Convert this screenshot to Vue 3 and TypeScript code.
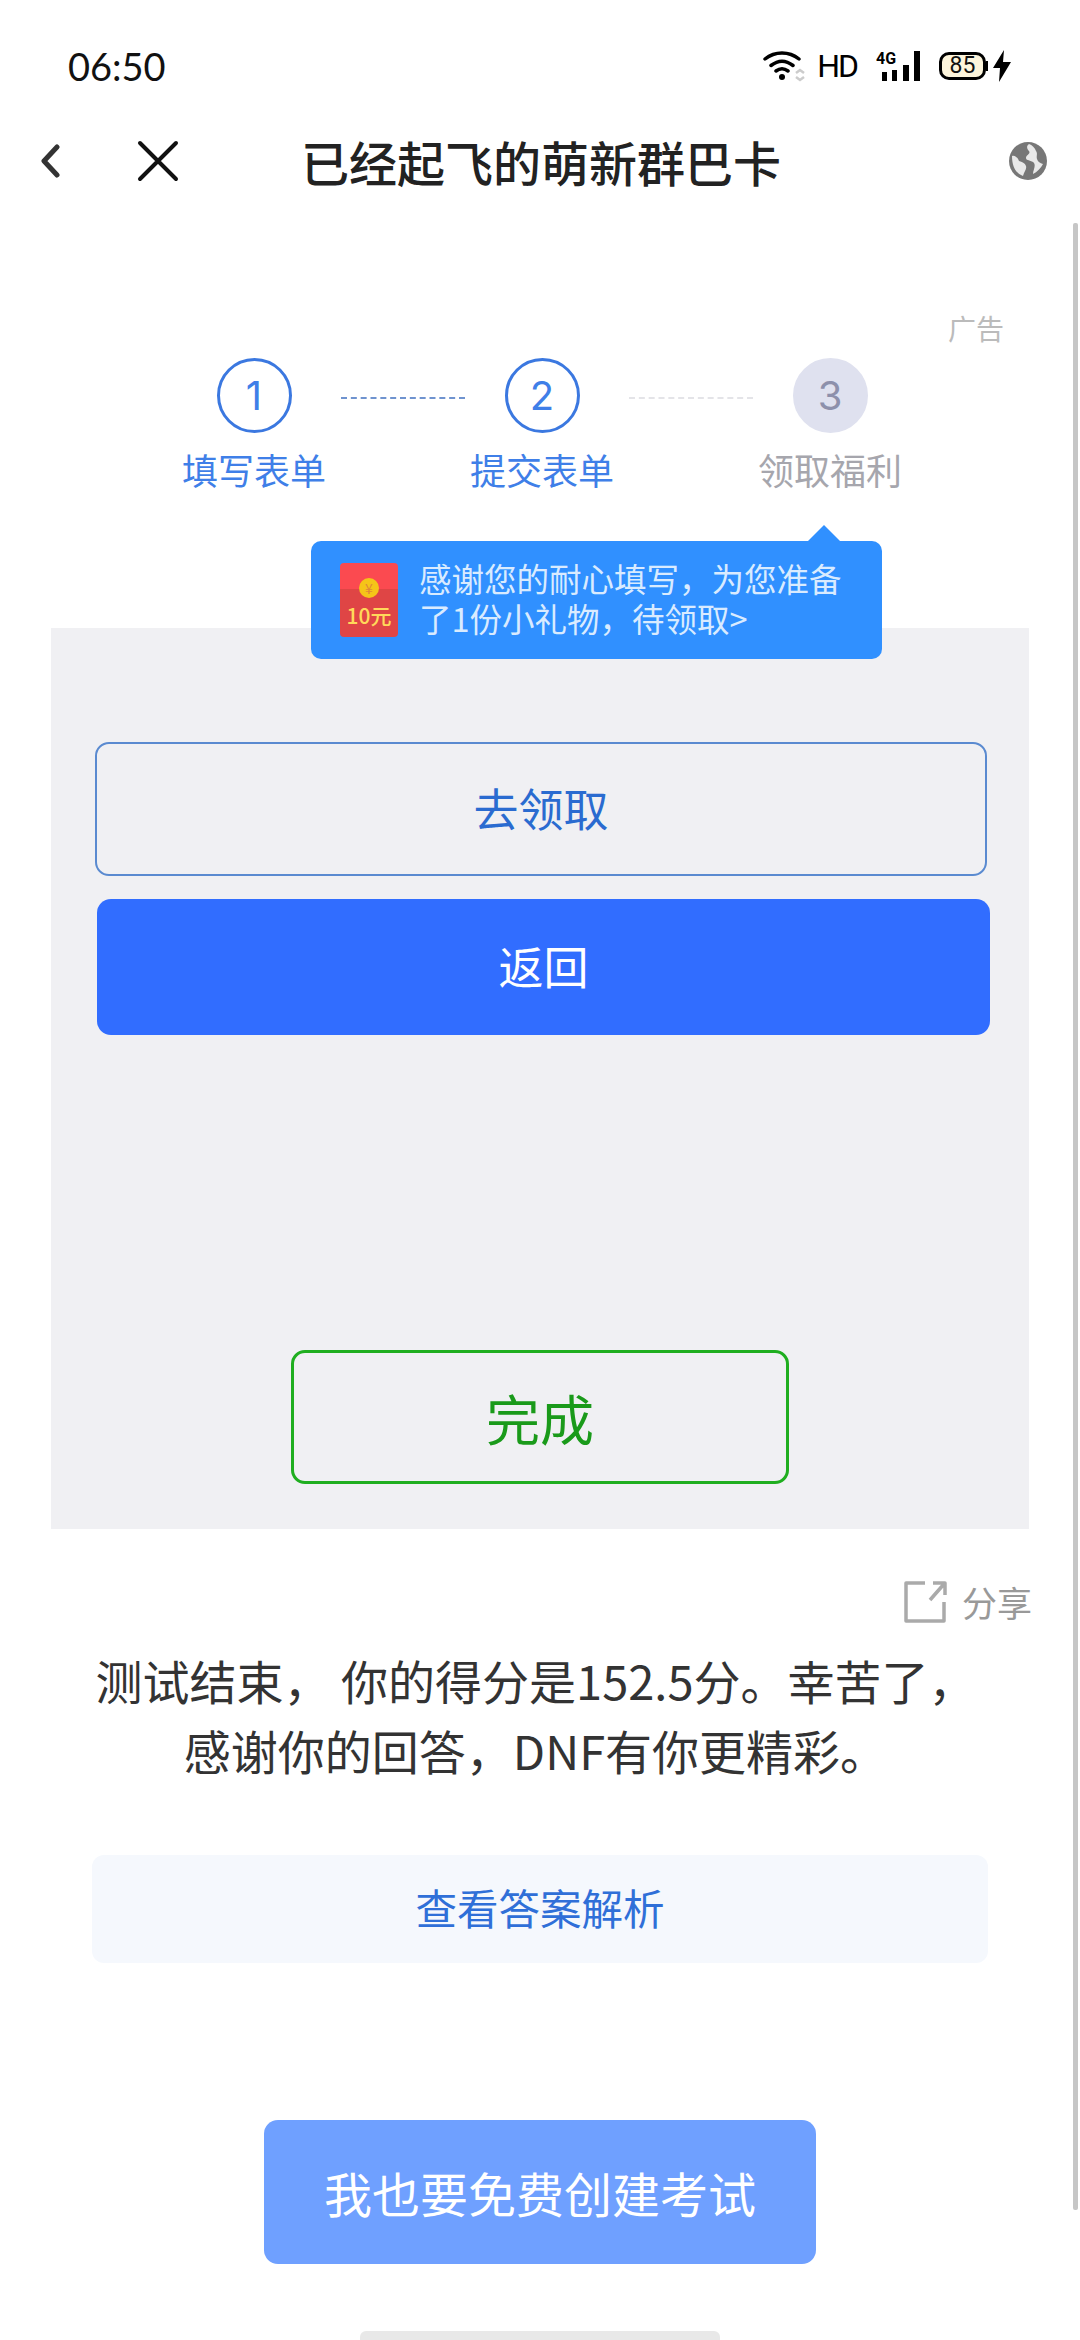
<script setup lang="ts">
interface Step {
  num: number
  label: string
  done: boolean
}

const steps: Step[] = [
  { num: 1, label: '填写表单', done: true },
  { num: 2, label: '提交表单', done: true },
  { num: 3, label: '领取福利', done: false },
]
</script>

<template>
  <div class="page">
    <div class="status">
      <span class="status__time">06:50</span>
      <div class="status__icons">
        <svg width="44" height="32" viewBox="0 0 44 32">
          <path d="M2 9C12 1 26 1 36 9M8 15.500C15 10 23 10 30 15.500M13 21C17 18 21 18 25 21" fill="none" stroke="#000" stroke-width="3.500" stroke-linecap="round" />
          <circle cx="19" cy="27" r="3" fill="#000" />
          <path d="M33 23l4-3 4 3M33 27l4 3 4-3" fill="none" stroke="#ccc" stroke-width="2.500" />
        </svg>
        <span class="status__hd">HD</span>
        <svg class="status__signal" width="44" height="32" viewBox="0 0 44 32">
          <text x="0" y="14" font-size="16" font-weight="700" font-family="Roboto, sans-serif">4G</text>
          <rect x="6" y="22" width="5" height="9" />
          <rect x="16" y="20" width="5" height="11" />
          <rect x="27" y="15" width="6" height="16" />
          <rect x="38" y="1" width="6" height="30" />
        </svg>
        <div class="battery">
          <span class="battery__body">85</span>
          <span class="battery__cap"></span>
        </div>
        <svg class="status__bolt" width="20" height="32" viewBox="0 0 20 32">
          <path d="M12 0 1 18h7l-1 14 12-20h-8z" fill="#000" />
        </svg>
      </div>
    </div>

    <div class="nav">
      <svg class="nav__back" width="20" height="34" viewBox="0 0 20 34">
        <path d="M17 3 4 17l13 14" fill="none" stroke="#333" stroke-width="5" stroke-linecap="round" stroke-linejoin="round" />
      </svg>
      <svg class="nav__close" width="42" height="42" viewBox="0 0 42 42">
        <path d="M3 3l36 36M39 3 3 39" fill="none" stroke="#111" stroke-width="4" stroke-linecap="round" />
      </svg>
      <h1 class="nav__title">已经起飞的萌新群巴卡</h1>
      <svg class="nav__globe" width="38" height="38" viewBox="0 0 38 38">
        <circle cx="19" cy="19" r="19" fill="#777" />
        <path d="M20 2c-3 2-2 5 0 7 2 3-3 4-3 7 0 3 6 2 8 5 2 3-1 7-1 11 4-2 8-6 10-10-3-1-5-2-6-5-1-3 1-5-1-8-1-3-4-6-7-7zM3 14c3-1 6 2 7 5 3 1 6 2 7 5 1 3-2 6-3 10C8 32 3 26 3 14z" fill="#e9e9e9" />
      </svg>
    </div>

    <div class="ad-row"><span class="ad">广告</span></div>

    <div class="steps">
      <template v-for="(step, i) in steps" :key="step.num">
        <div class="step" :class="{ 'step--todo': !step.done }">
          <span class="step__num">{{ step.num }}</span>
          <span class="step__label">{{ step.label }}</span>
        </div>
        <span v-if="i < steps.length - 1" class="step-line" :class="{ 'step-line--todo': i > 0 }"></span>
      </template>
    </div>

    <div class="panel-wrap">
      <div class="tip">
        <div class="packet">
          <span class="packet__coin">¥</span>
          <span class="packet__amount">10元</span>
        </div>
        <p class="tip__text">感谢您的耐心填写，为您准备<br />了1份小礼物，待领取&gt;</p>
      </div>
      <div class="panel">
        <button class="btn btn--outline">去领取</button>
        <button class="btn btn--solid">返回</button>
        <button class="btn-done">完成</button>
      </div>
    </div>

    <div class="share">
      <svg width="44" height="44" viewBox="0 0 44 44">
        <path d="M22 3H3v38h38V22M27 20 41 4M30 3h12v12" fill="none" stroke="#aaa" stroke-width="3.500" stroke-linejoin="round" />
      </svg>
      <span class="share__text">分享</span>
    </div>

    <p class="result">测试结束， 你的得分是152.5分。幸苦了，<br />感谢你的回答，DNF有你更精彩。</p>

    <div class="answers">查看答案解析</div>

    <button class="create">我也要免费创建考试</button>

    <span class="scrollbar"></span>
    <span class="home-bar"></span>
  </div>
</template>

<style>
html,
body {
  margin: 0;
  background: #fff;
}
</style>

<style scoped>
.page {
  position: relative;
  width: 1080px;
  height: 2340px;
  overflow: hidden;
  display: flex;
  flex-direction: column;
  background: #fff;
  font-family: "Noto Sans CJK SC", "Noto Sans", sans-serif;
}

.status {
  display: flex;
  justify-content: space-between;
  align-items: center;
  height: 32px;
  margin-top: 50px;
  padding: 0 68px 0 68px;
}

.status__time {
  font-family: Lato, sans-serif;
  font-size: 38px;
  line-height: 32px;
  color: #111;
}

.status__icons {
  display: flex;
  align-items: center;
}

.status__hd {
  margin-left: 10px;
  font-family: Roboto, sans-serif;
  font-size: 32px;
  letter-spacing: -2px;
  color: #000;
}

.status__signal {
  margin-left: 19px;
}

.battery {
  display: flex;
  align-items: center;
  margin-left: 19px;
}

.battery__body {
  box-sizing: border-box;
  width: 47px;
  height: 28px;
  line-height: 22px;
  border: 3px solid #000;
  border-radius: 10px;
  background: #fdf5dc;
  text-align: center;
  font-family: Roboto, sans-serif;
  font-size: 23px;
  color: #111;
}

.battery__cap {
  width: 2px;
  height: 10px;
  background: #000;
}

.status__bolt {
  margin-left: 4px;
}

.nav {
  display: flex;
  align-items: center;
  height: 46px;
  margin-top: 56px;
  padding-left: 40px;
}

.nav__close {
  margin-left: 77px;
}

.nav__title {
  margin: 0 0 0 122px;
  font-size: 48px;
  font-weight: 500;
  line-height: 46px;
  color: #222;
  white-space: nowrap;
}

.nav__globe {
  margin-left: 228px;
}

.ad-row {
  display: flex;
  justify-content: flex-end;
  margin-top: 124px;
  padding-right: 76px;
}

.ad {
  font-size: 28px;
  line-height: 40px;
  color: #bbb;
}

.steps {
  display: flex;
  align-items: flex-start;
  margin-top: 10px;
  padding-left: 184px;
}

.step {
  display: flex;
  flex-direction: column;
  align-items: center;
  width: 140px;
  gap: 14px;
  color: #3f7fe8;
}

.step__num {
  box-sizing: border-box;
  width: 75px;
  height: 75px;
  border: 3px solid #3b78e0;
  border-radius: 50%;
  text-align: center;
  font-family: Inter, sans-serif;
  font-size: 40px;
  line-height: 69px;
}

.step__label {
  font-size: 36px;
  line-height: 44px;
  white-space: nowrap;
}

.step--todo {
  color: #a6a6ad;
}

.step--todo .step__num {
  border-color: #dfe1ef;
  background: #dfe1ef;
  color: #8d90ab;
}

.step-line {
  width: 124px;
  margin: 39px 7px 0 17px;
  border-top: 2px dashed #6f93cf;
}

.step-line--todo {
  border-top-color: #e4e4e8;
}

.panel-wrap {
  position: relative;
  margin-top: 137px;
  padding: 0 51px;
}

.tip {
  position: absolute;
  left: 311px;
  top: -87px;
  z-index: 1;
  display: flex;
  align-items: center;
  box-sizing: border-box;
  width: 571px;
  height: 118px;
  padding-left: 29px;
  border-radius: 10px;
  background: #3090ff;
}

.tip::before {
  content: "";
  position: absolute;
  right: 42px;
  top: -16px;
  border-left: 16px solid transparent;
  border-right: 16px solid transparent;
  border-bottom: 16px solid #3090ff;
}

.packet {
  display: flex;
  flex-direction: column;
  align-items: center;
  flex: none;
  width: 58px;
  height: 74px;
  border-radius: 4px;
  background: linear-gradient(#fb4a50 0 35%, #df4545 35%);
}

.packet__coin {
  width: 20px;
  height: 20px;
  margin-top: 15px;
  border-radius: 50%;
  background: #f5c518;
  text-align: center;
  font-size: 14px;
  line-height: 20px;
  color: #e0873a;
}

.packet__amount {
  margin-top: 5px;
  font-size: 21px;
  font-weight: 500;
  line-height: 24px;
  color: #ffd95a;
  white-space: nowrap;
}

.tip__text {
  margin: 0 0 4px 21px;
  font-size: 32.500px;
  line-height: 40px;
  color: #d9ebff;
  white-space: nowrap;
}

.panel {
  display: flex;
  flex-direction: column;
  box-sizing: border-box;
  height: 901px;
  padding: 114px 40px 0 44px;
  background: #f0f0f3;
}

.btn {
  box-sizing: border-box;
  border-radius: 14px;
  padding-bottom: 4px;
  font-family: inherit;
  font-size: 45px;
}

.btn--outline {
  width: 892px;
  height: 134px;
  border: 2px solid #5a8ad0;
  background: transparent;
  color: #2a6bd0;
}

.btn--solid {
  width: 893px;
  height: 136px;
  margin: 23px 0 0 2px;
  border: none;
  background: #316dff;
  color: #fff;
}

.btn-done {
  box-sizing: border-box;
  align-self: center;
  width: 498px;
  height: 134px;
  margin: 315px 0 0 -4px;
  border: 3px solid #1fae1f;
  border-radius: 14px;
  background: transparent;
  font-family: inherit;
  font-size: 54px;
  color: #1a9a1a;
}

.share {
  display: flex;
  align-items: center;
  justify-content: flex-end;
  gap: 15px;
  margin-top: 51px;
  padding-right: 48px;
}

.share__text {
  font-size: 35px;
  line-height: 44px;
  color: #999;
}

.result {
  margin: 21px 0 0;
  padding-right: 9px;
  text-align: center;
  font-size: 47px;
  line-height: 70px;
  color: #333;
  white-space: nowrap;
}

.answers {
  box-sizing: border-box;
  width: 896px;
  height: 108px;
  margin: 70px 0 0 92px;
  border-radius: 12px;
  background: #f5f8fd;
  text-align: center;
  font-size: 41.500px;
  line-height: 104px;
  color: #2f6fd8;
}

.create {
  width: 552px;
  height: 144px;
  margin: 157px 0 0 264px;
  border: none;
  border-radius: 14px;
  background: #6fa0ff;
  font-family: inherit;
  font-size: 48px;
  color: #fff;
}

.scrollbar {
  position: absolute;
  right: 2px;
  top: 223px;
  width: 5px;
  height: 1987px;
  border-radius: 2px;
  background: #c6c6c6;
}

.home-bar {
  position: absolute;
  left: 360px;
  bottom: 0;
  width: 360px;
  height: 9px;
  border-radius: 6px 6px 0 0;
  background: #e8e8e8;
}
</style>
